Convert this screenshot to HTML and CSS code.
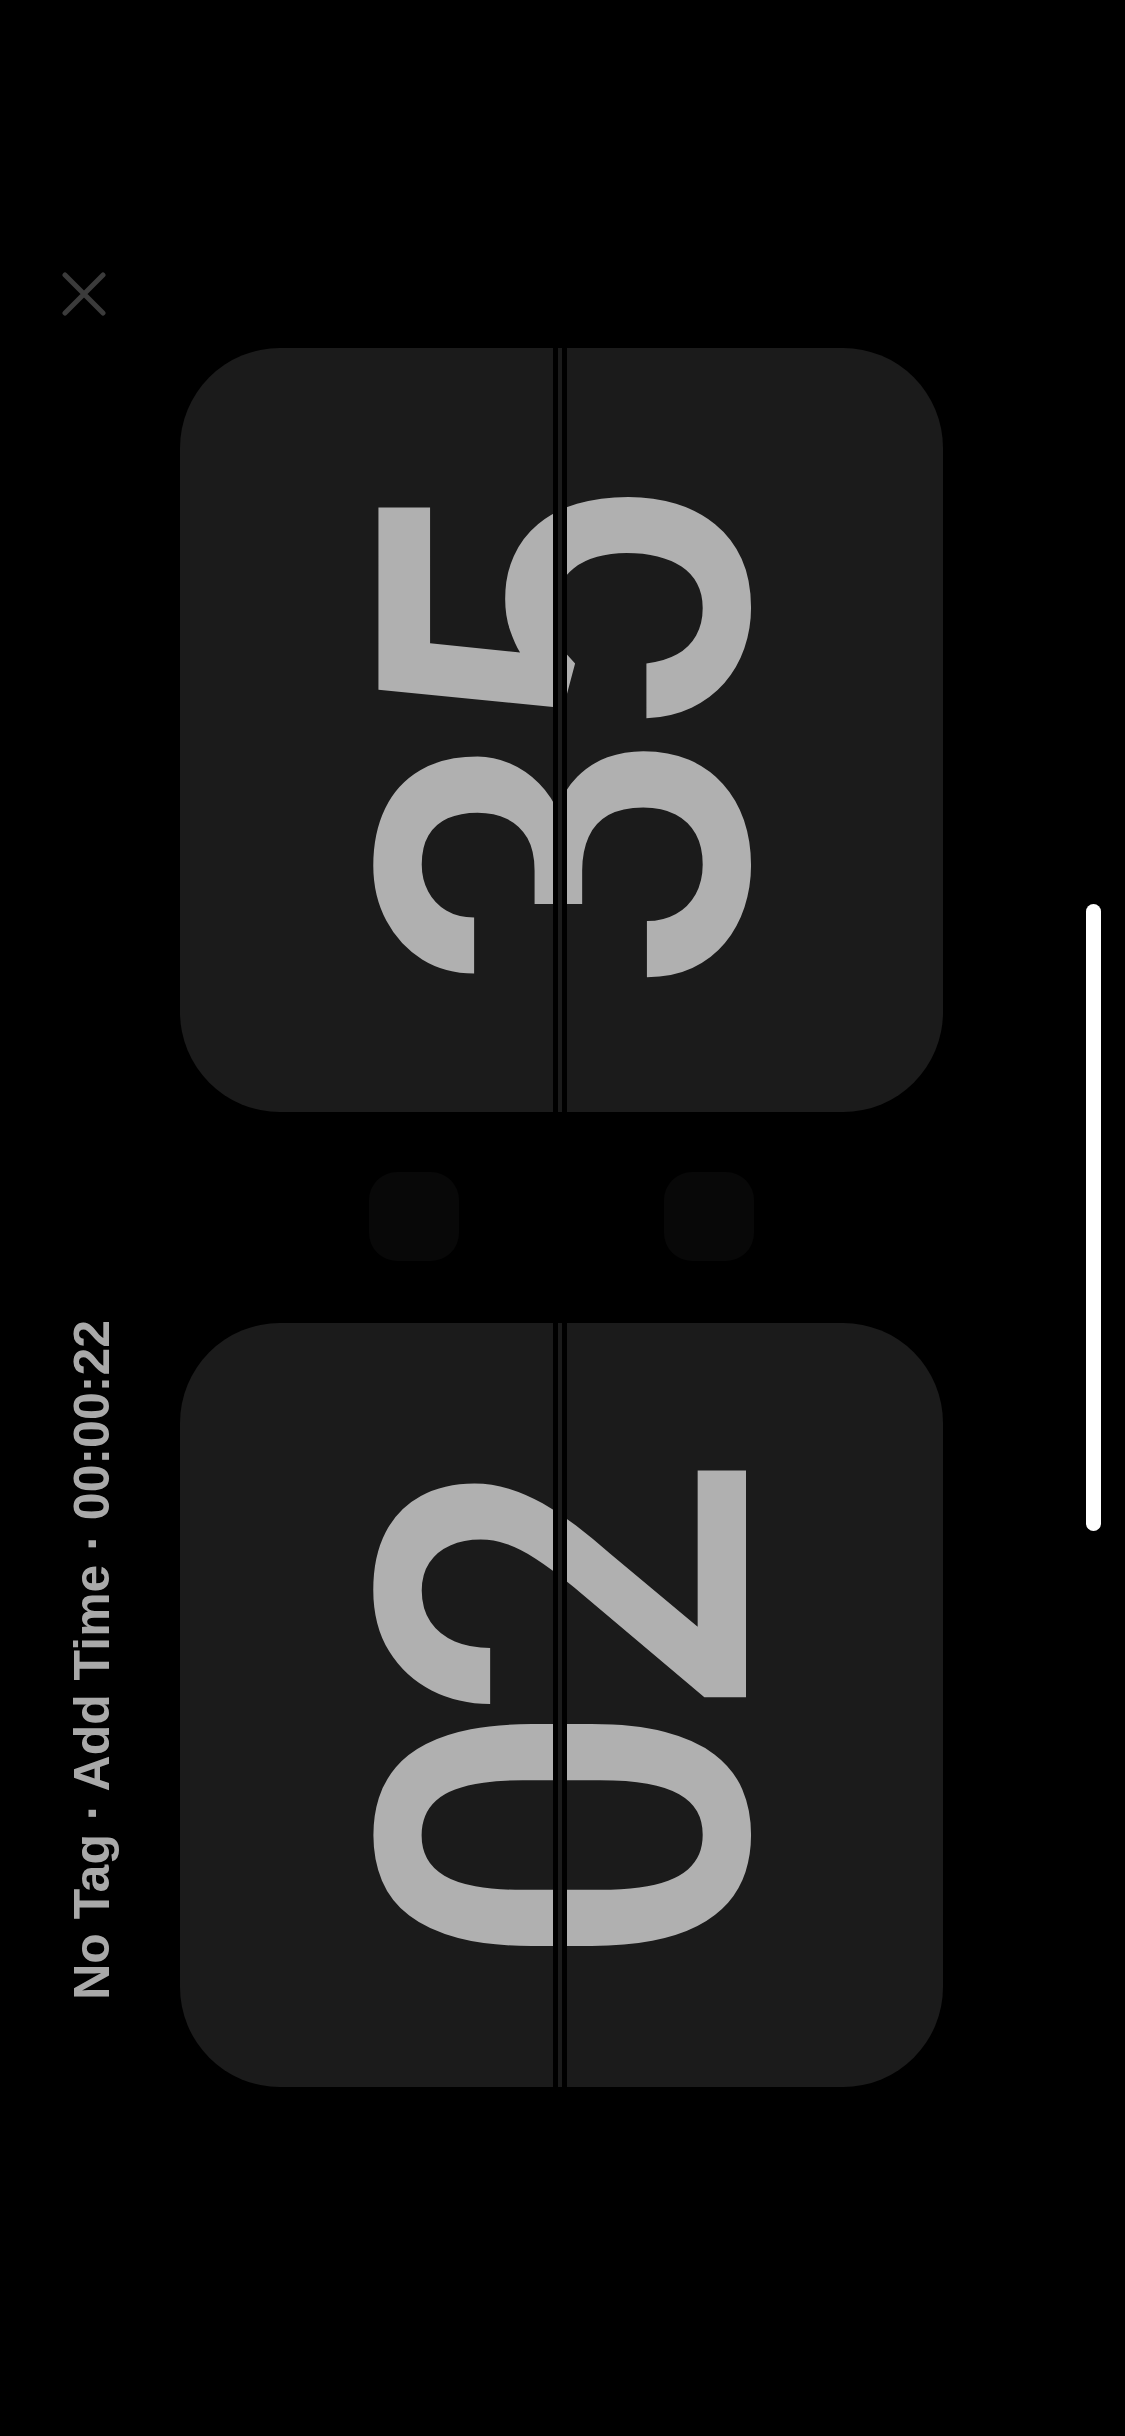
FILE: index.html
```html
<!DOCTYPE html>
<html lang="en">
<head>
<meta charset="utf-8">
<title>Flip Clock</title>
<link rel="stylesheet" href="styles.css">
</head>
<body>
<div class="screen">
  <aside class="side">
    <button class="close" aria-label="Close">
      <svg viewBox="0 0 44 44" width="44" height="44"><path d="M3 3 L41 41 M41 3 L3 41" stroke="#3b3b3b" stroke-width="5" stroke-linecap="round" fill="none"/></svg>
    </button>
    <div class="label">No Tag · Add Time · 00:00:22</div>
  </aside>
  <main class="stage">
    <div class="card"><span class="digits">35</span></div>
    <div class="colon"><span class="dot"></span><span class="dot"></span></div>
    <div class="card"><span class="digits">02</span></div>
  </main>
  <div class="rail"><div class="bar"></div></div>
</div>
</body>
</html>
```

FILE: styles.css
```css
html, body {
  margin: 0;
  padding: 0;
  background: #000;
}
.screen {
  width: 1125px;
  height: 2436px;
  background: #000;
  display: flex;
  overflow: hidden;
}
.side {
  width: 180px;
  flex: none;
  display: flex;
  flex-direction: column;
}
.close {
  margin: 272px 0 0 62px;
  padding: 0;
  border: 0;
  background: none;
  width: 44px;
  height: 44px;
  display: block;
}
.close svg { display: block; }
.label {
  margin: 1004px 0 0 67px;
  writing-mode: vertical-rl;
  transform: rotate(180deg);
  font-family: "Liberation Sans", Arial, sans-serif;
  font-weight: 700;
  font-size: 50px;
  line-height: 50px;
  color: #a9a9a9;
  white-space: nowrap;
  align-self: flex-start;
}
.stage {
  width: 763px;
  flex: none;
  padding-top: 348px;
  display: flex;
  flex-direction: column;
}
.card {
  position: relative;
  height: 764px;
  background: #1b1b1b;
  border-radius: 100px;
  display: flex;
  align-items: center;
  justify-content: center;
  overflow: hidden;
}
.card::after {
  content: "";
  position: absolute;
  top: 0;
  bottom: 0;
  left: 373px;
  width: 4px;
  border-left: 5px solid #000;
  border-right: 5px solid #000;
  background: #1b1b1b;
}
.digits {
  writing-mode: vertical-rl;
  transform: rotate(180deg) scaleY(0.92);
  font-family: Roboto, "Liberation Sans", sans-serif;
  font-weight: 500;
  font-size: 517px;
  line-height: 1;
  color: #b0b0b0;
  letter-spacing: -25px;
  margin: 36px 0 0 16px;
}
.colon {
  height: 89px;
  margin: 60px 0 62px;
  display: flex;
  justify-content: center;
  gap: 205px;
}
.dot {
  width: 90px;
  height: 89px;
  background: #080808;
  border-radius: 28px;
}
.rail {
  flex: none;
  padding: 904px 0 0 143px;
}
.bar {
  width: 15px;
  height: 627px;
  background: #fff;
  border-radius: 8px;
}
```
